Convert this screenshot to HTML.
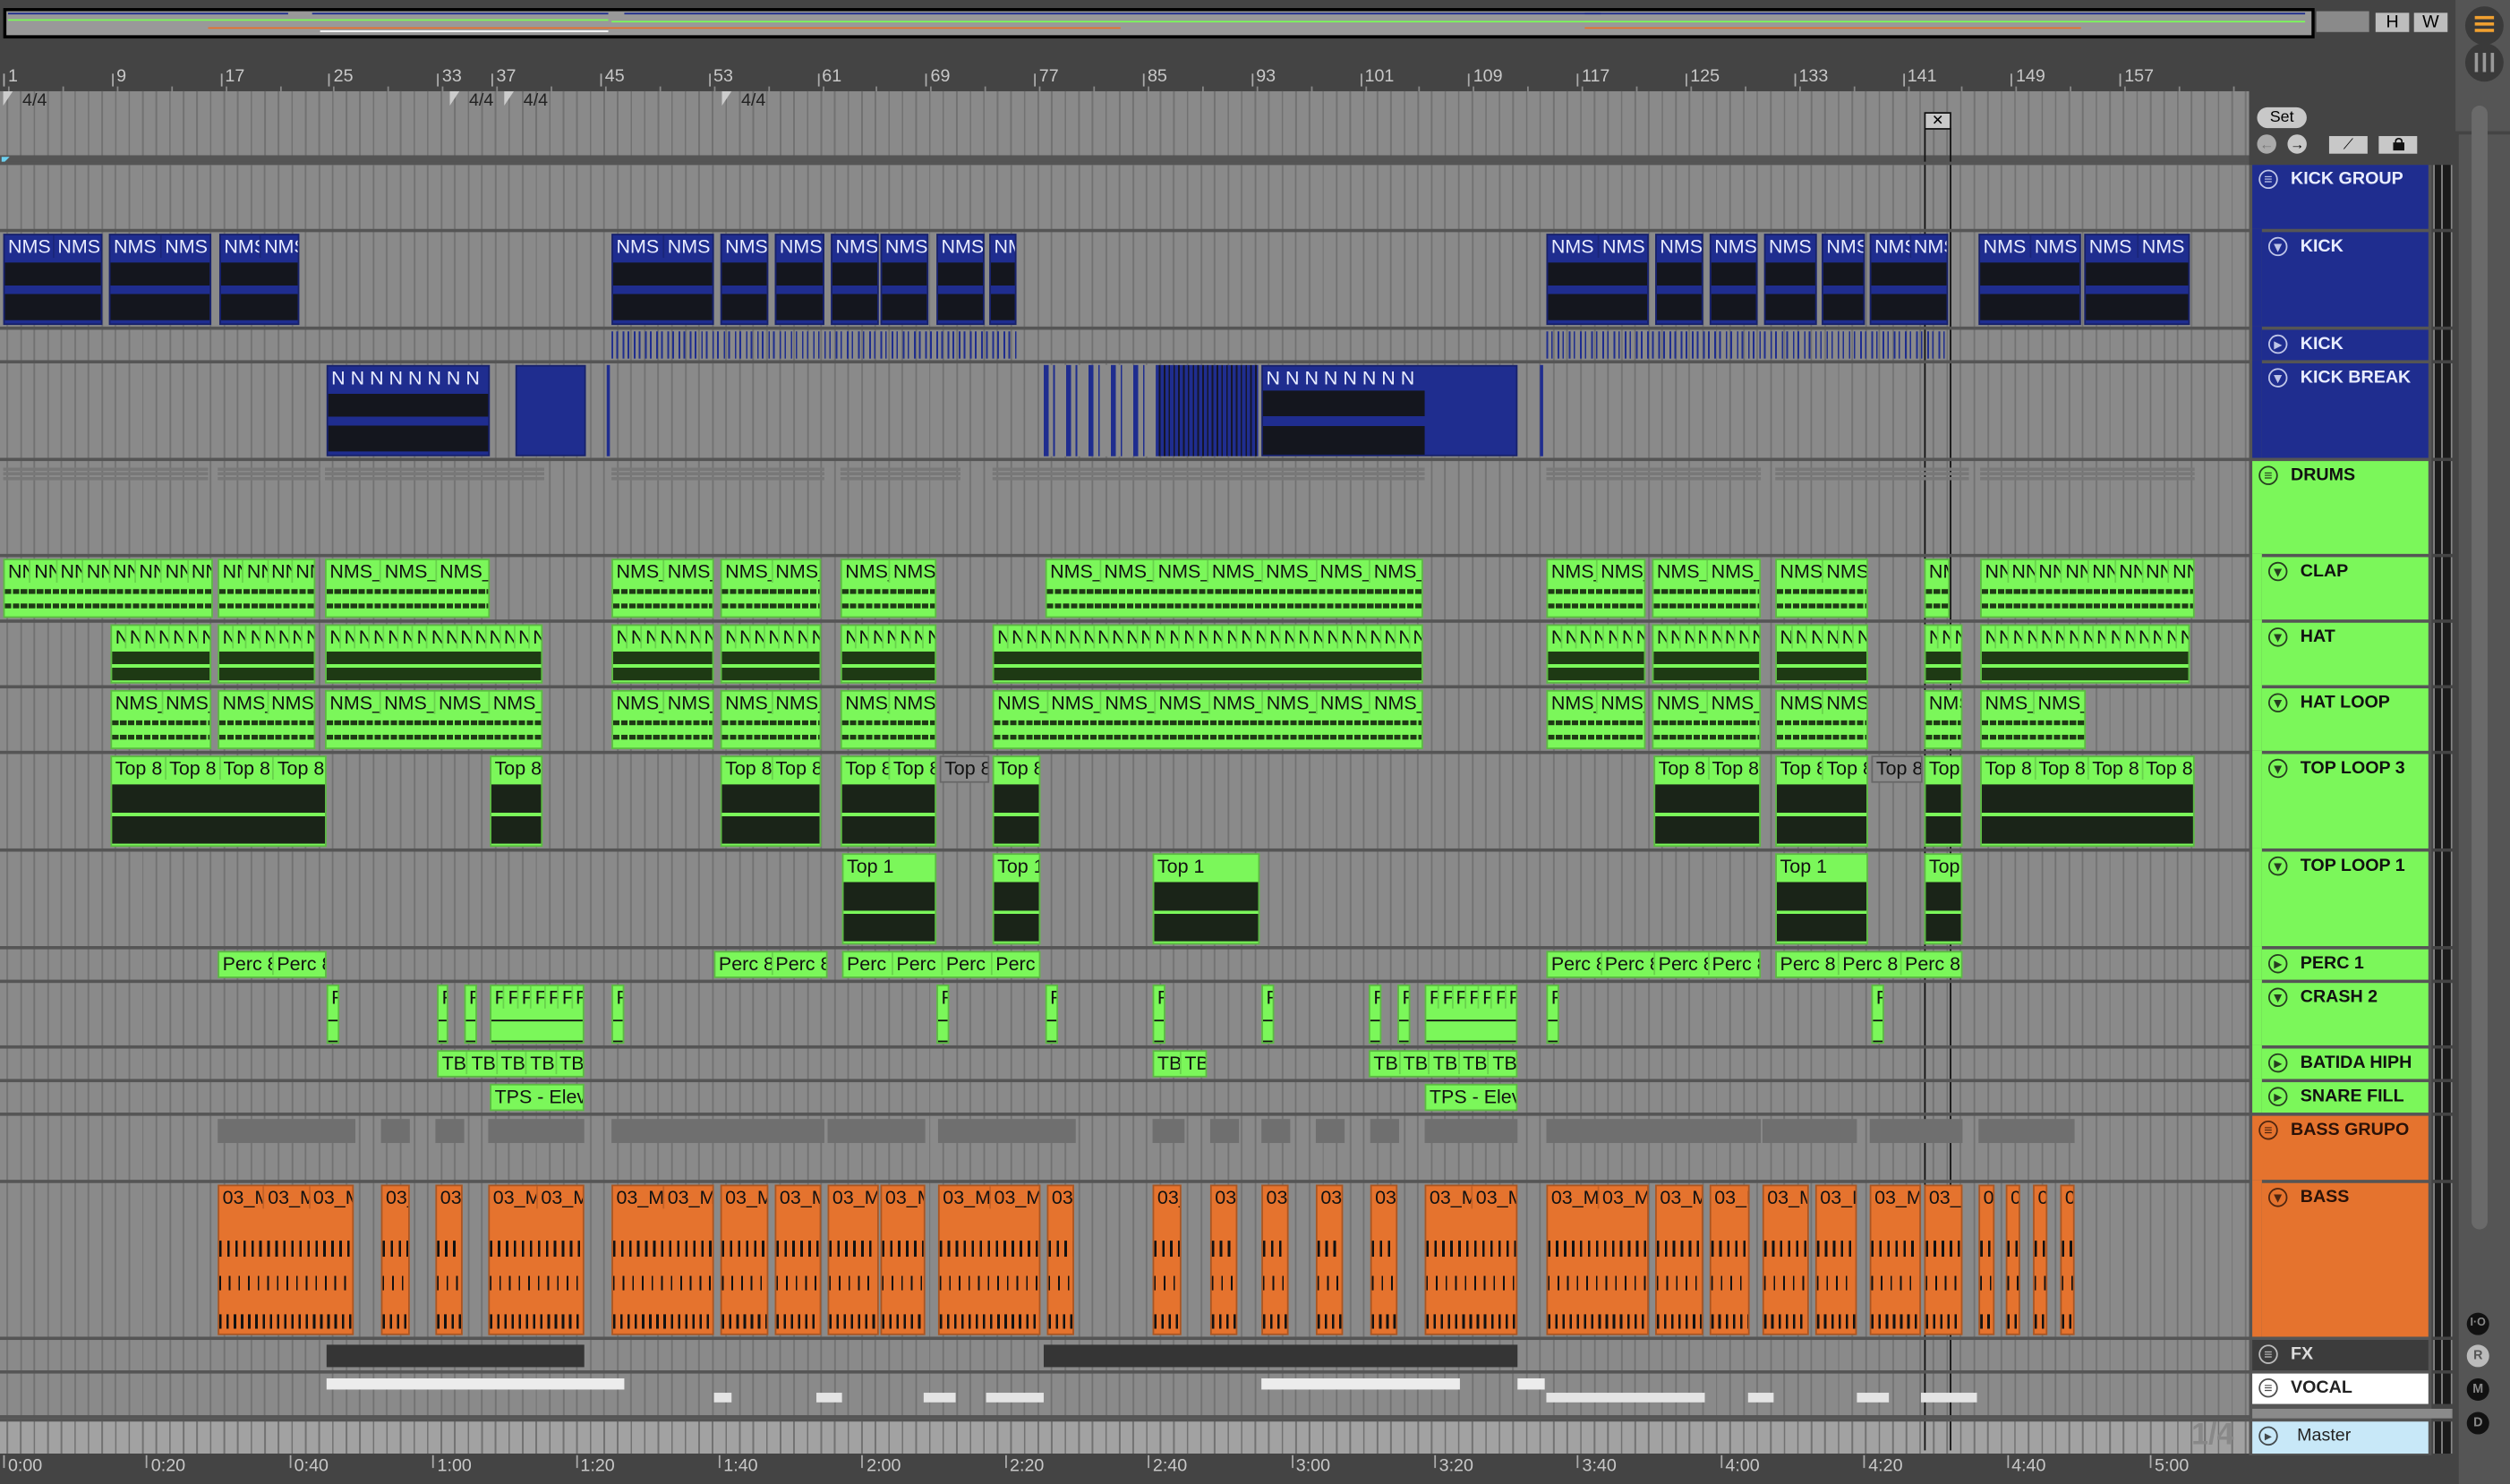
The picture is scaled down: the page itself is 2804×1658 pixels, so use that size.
<!DOCTYPE html>
<html><head><meta charset="utf-8">
<style>
html,body{margin:0;padding:0;background:#444;overflow:hidden;width:2804px;height:1658px}
#w{position:absolute;left:0;top:0;width:1568px;height:927px;transform:scale(1.78827,1.78856);transform-origin:0 0;background:#444;font-family:"Liberation Sans Narrow","Liberation Sans",sans-serif;overflow:hidden}
.a{position:absolute}
.grid{background-color:#8a8a8a;background-image:repeating-linear-gradient(90deg,#727272 0 1px,transparent 1px 8.475px);background-position:4px 0}
</style></head><body>
<div id="w">
<div class="a" style="left:2px;top:5px;width:1440px;height:15px;border:2px solid #000;background:#999"></div>
<div class="a" style="left:1447px;top:7px;width:33px;height:13px;background:#8a8a8a"></div>
<div class="a" style="left:1484px;top:8px;width:21px;height:12px;background:#bdbdbd;font:11px 'Liberation Sans',sans-serif;text-align:center;line-height:12px">H</div>
<div class="a" style="left:1508px;top:8px;width:21px;height:12px;background:#bdbdbd;font:11px 'Liberation Sans',sans-serif;text-align:center;line-height:12px">W</div>
<div class="a" style="left:1534px;top:0;width:34px;height:82px;background:#555"></div>
<div class="a" style="left:1540px;top:4px;width:24px;height:24px;border-radius:50%;background:#3a3a3a"></div>
<div class="a" style="left:1546px;top:10px;width:12px;height:2px;background:#f0a030;box-shadow:0 4px 0 #f0a030,0 8px 0 #f0a030"></div>
<div class="a" style="left:1540px;top:27px;width:24px;height:24px;border-radius:50%;background:#3a3a3a"></div>
<div class="a" style="left:1546px;top:33px;width:2px;height:12px;background:#999;box-shadow:5px 0 0 #999,10px 0 0 #999"></div>
<div class="a" style="left:1536px;top:84px;width:32px;height:843px;background:#555"></div>
<div class="a" style="left:1544px;top:66px;width:10px;height:702px;border-radius:5px;background:#6a6a6a"></div>
<div class="a" style="left:1541px;top:820px;width:14px;height:14px;border-radius:50%;background:#111;color:#888;font:bold 7px 'Liberation Sans';text-align:center;line-height:14px">I·O</div>
<div class="a" style="left:1541px;top:840px;width:14px;height:14px;border-radius:50%;background:#bbb;color:#555;font:bold 8px 'Liberation Sans';text-align:center;line-height:14px">R</div>
<div class="a" style="left:1541px;top:861px;width:14px;height:14px;border-radius:50%;background:#111;color:#888;font:bold 8px 'Liberation Sans';text-align:center;line-height:14px">M</div>
<div class="a" style="left:1541px;top:882px;width:14px;height:14px;border-radius:50%;background:#111;color:#888;font:bold 8px 'Liberation Sans';text-align:center;line-height:14px">D</div>
<div class="a grid" style="left:0;top:57px;width:1405px;height:40px"></div>
<div class="a" style="left:0;top:97px;width:1405px;height:6px;background:#555"></div>
<div class="a" style="left:1px;top:98px;width:0;height:0;border-left:5px solid #6cd0f0;border-bottom:5px solid transparent"></div>
<div class="a grid" id="arr" style="left:0;top:103px;width:1405px;height:783px"></div>
<div class="a grid" style="left:0;top:886px;width:1405px;height:22px;background-color:#a2a2a2"></div>
<div class="a" style="left:1369px;top:886px;font:bold 19px 'Liberation Sans';color:#888">1/4</div>
<div class="a" style="left:1410px;top:67px;width:31px;height:13px;border-radius:7px;background:#c8c8c8;font:10px 'Liberation Sans';text-align:center;line-height:13px">Set</div>
<div class="a" style="left:1410px;top:84px;width:12px;height:12px;border-radius:50%;background:#aaa;font:9px 'Liberation Sans';text-align:center;line-height:12px;color:#777">←</div>
<div class="a" style="left:1429px;top:84px;width:12px;height:12px;border-radius:50%;background:#c8c8c8;font:bold 9px 'Liberation Sans';text-align:center;line-height:12px">→</div>
<div class="a" style="left:1455px;top:85px;width:24px;height:11px;background:#c8c8c8;font:9px 'Liberation Sans';text-align:center;line-height:11px">⟋</div>
<div class="a" style="left:1486px;top:85px;width:24px;height:11px;background:#c8c8c8"><div style="position:absolute;left:9px;top:4px;width:7px;height:5px;background:#111"></div><div style="position:absolute;left:10px;top:1px;width:3px;height:3px;border:1px solid #111;border-bottom:none;border-radius:3px 3px 0 0"></div></div>
<div class="a" style="left:1405px;top:103px;width:114px;height:806px;background:#555"></div>
<div class="a" style="left:0;top:908px;width:1405px;height:19px;background:#444"></div>
<div class="a" style="left:1202px;top:70px;width:15px;height:9px;background:#c8c8c8;border:1px solid #111;text-align:center;font:9px 'Liberation Sans';line-height:9px">✕</div>
<div class="a" style="left:1202px;top:80px;width:1px;height:826px;background:#111"></div>
<div class="a" style="left:1218px;top:80px;width:1px;height:826px;background:#111"></div>
</div>
<script>
var W=document.getElementById('w');
function el(css,html){var d=document.createElement('div');d.className='a';d.style.cssText=css;if(html)d.innerHTML=html;W.appendChild(d);return d;}
var bars=[1,9,17,25,33,37,45,53,61,69,77,85,93,101,109,117,125,133,141,149,157];
bars.forEach(function(b){var x=5+(b-1)*8.475;el('left:'+(x-3)+'px;top:46px;width:1px;height:8px;background:#aaa');el('left:'+x+'px;top:42px;font-size:11px;color:#c8c8c8',''+b);});
for(var i=0;i<42;i++){el('left:'+(5+i*33.9)+'px;top:54px;width:1px;height:3px;background:#888');}
[[5,'4/4'],[284,'4/4'],[318,'4/4'],[454,'4/4']].forEach(function(t){el('left:'+(t[0]-3)+'px;top:57px;width:0;height:0;border-top:9px solid #ccc;border-right:6px solid transparent');el('left:'+(t[0]+9)+'px;top:57px;font-size:11px;color:#222',t[1]);});
var tl=['0:00','0:20','0:40','1:00','1:20','1:40','2:00','2:20','2:40','3:00','3:20','3:40','4:00','4:20','4:40','5:00'];
tl.forEach(function(t,i){var x=5+i*89.4;el('left:'+(x-3)+'px;top:909px;width:1px;height:8px;background:#aaa');el('left:'+x+'px;top:910px;font-size:11px;color:#c8c8c8',t);});
var T=[
['KICK GROUP',103,41,'#1f2d8f','#e8ecff','g',0],
['KICK',145,60,'#1f2d8f','#e8ecff','d',1],
['KICK',206,20,'#1f2d8f','#e8ecff','p',1],
['KICK BREAK',227,60,'#1f2d8f','#e8ecff','d',1],
['DRUMS',288,59,'#7bf75a','#111','g',0],
['CLAP',348,40,'#7bf75a','#111','d',1],
['HAT',389,40,'#7bf75a','#111','d',1],
['HAT LOOP',430,40,'#7bf75a','#111','d',1],
['TOP LOOP 3',471,60,'#7bf75a','#111','d',1],
['TOP LOOP 1',532,60,'#7bf75a','#111','d',1],
['PERC 1',593,20,'#7bf75a','#111','p',1],
['CRASH 2',614,40,'#7bf75a','#111','d',1],
['BATIDA HIPH',655,20,'#7bf75a','#111','p',1],
['SNARE FILL',676,20,'#7bf75a','#111','p',1],
['BASS GRUPO',697,41,'#e5732e','#2a1208','g',0],
['BASS',739,97,'#e5732e','#2a1208','d',1],
['FX',837,20,'#3c3c3c','#ddd','g',0],
['VOCAL',858,20,'#ffffff','#222','g',0],
['Master',888,21,'#c8e8f8','#222','p',0]];
T.forEach(function(t){
 var y=t[1],h=t[2];
 el('left:0;top:'+(y-2)+'px;width:1405px;height:2px;background:#555');
 var ind=t[6]?6:0;
 var d=el('left:'+(1407+ind)+'px;top:'+y+'px;width:'+(110-ind)+'px;height:'+(h-1)+'px;background:'+t[3]+';color:'+t[4]+';font-family:"Liberation Sans",sans-serif;font-weight:'+(t[0]=='Master'?'normal':'bold')+';font-size:11px');
 if(ind) el('left:1407px;top:'+(y-2)+'px;width:6px;height:'+(h+1)+'px;background:'+t[3]);
 var icc=t[5]=='g'?'≡':(t[5]=='d'?'▾':'▸');
 d.innerHTML='<div style="position:absolute;left:4px;top:3px;width:12px;height:12px;border:1.3px solid '+t[4]+';opacity:.8;border-radius:50%;box-sizing:border-box;font-size:9px;line-height:10px;text-align:center">'+icc+'</div><span style="position:absolute;left:'+(t[0]=='Master'?28:24)+'px;top:3px">'+t[0]+'</span>';
 el('left:1520px;top:'+y+'px;width:12px;height:'+(h-1)+'px;background:#1a1a1a;border-left:1px solid #888;border-right:1px solid #888;box-sizing:border-box');
 el('left:1525px;top:'+y+'px;width:1px;height:'+(h-1)+'px;background:#888');
});
el('left:1407px;top:880px;width:125px;height:6px;background:#8a8a8a');
el('left:0;top:884px;width:1405px;height:2px;background:#555');
function C(x1,x2,y,h,col,txt,sub,wave,lab){
 var d=el('left:'+x1+'px;top:'+(y+1)+'px;width:'+(x2-x1)+'px;height:'+(h-3)+'px;background:'+col+';overflow:hidden;border:1px solid rgba(0,0,0,.25);box-sizing:border-box');
 var s='';var n=Math.max(1,Math.round((x2-x1)/sub));var sw=(x2-x1)/n;
 var tc=col=='#1f2d8f'?'#e8ecff':'#111';
 if(lab!==false){s+='<div style="position:absolute;left:0;top:0;height:14px;width:100%;white-space:nowrap;font-size:12px;line-height:15px;color:'+tc+'">';
 for(var i=0;i<n;i++)s+='<div style="display:inline-block;width:'+sw+'px;height:14px;overflow:hidden;box-sizing:border-box;border-right:1px solid rgba(0,0,0,.15);padding-left:2px;vertical-align:top">'+txt+'</div>';
 s+='</div>';}
 var top=lab===false?0:14;
 if(wave=='blue')s+='<div style="position:absolute;left:0;right:0;top:'+(top+3)+'px;bottom:2px;background:linear-gradient(#14161e 0 40%,#1f2d8f 40% 55%,#14161e 55%)"></div>';
 if(wave=='gl')s+='<div style="position:absolute;left:0;right:0;top:'+(top+4)+'px;height:3px;background:repeating-linear-gradient(90deg,#1e3a14 0 4px,#7bf75a 4px 5px)"></div><div style="position:absolute;left:0;right:0;top:'+(top+13)+'px;height:3px;background:repeating-linear-gradient(90deg,#1e3a14 0 4px,#7bf75a 4px 5px)"></div>';
 if(wave=='gd')s+='<div style="position:absolute;left:0;right:0;top:'+(top+2)+'px;bottom:1px;background:linear-gradient(#1e3a14 0 44%,#7bf75a 44% 56%,#1e3a14 56%)"></div>';
 if(wave=='top')s+='<div style="position:absolute;left:0;right:0;top:'+(top+3)+'px;bottom:1px;background:linear-gradient(#1a2418 0 48%,#7bf75a 48% 54%,#1a2418 54%)"></div>';
 if(wave=='bass')s+='<div style="position:absolute;left:0;right:0;top:'+(top+20)+'px;height:10px;background:repeating-linear-gradient(90deg,#111 0 1.5px,transparent 1.5px 5px)"></div><div style="position:absolute;left:0;right:0;top:'+(top+42)+'px;height:9px;background:repeating-linear-gradient(90deg,#111 0 1px,transparent 1px 6px)"></div><div style="position:absolute;left:0;right:0;bottom:3px;height:9px;background:repeating-linear-gradient(90deg,#111 0 1.5px,transparent 1.5px 4.5px)"></div>';
 if(wave=='f')s+='<div style="position:absolute;left:0;right:0;top:'+(top+7)+'px;height:1px;background:#111"></div><div style="position:absolute;left:0;right:0;top:'+(top+20)+'px;height:1px;background:#111"></div>';
 d.innerHTML=s;return d;}
var B='#1f2d8f',G='#7bf75a',O='#e5732e';
[[2,64],[68,132],[137,187],[382,446],[450,480],[484,515],[519,549],[550,580],[585,615],[618,635],[966,1030],[1034,1064],[1068,1098],[1102,1135],[1138,1165],[1168,1217],[1236,1300],[1302,1368]].forEach(function(c){C(c[0],c[1],145,60,B,'NMS',32,'blue');});
[[382,635],[966,1217]].forEach(function(c){el('left:'+c[0]+'px;top:207px;width:'+(c[1]-c[0])+'px;height:17px;background:repeating-linear-gradient(90deg,#1f2d8f 0 1px,transparent 1px 3px,#1f2d8f 3px 4px,transparent 4px 7px)');});
C(204,306,227,60,B,'N N N N N N N N',102,'blue');
C(322,366,227,60,B,'',60,'none',false);
el('left:379px;top:228px;width:2px;height:57px;background:'+B);
el('left:652px;top:228px;width:70px;height:57px;background:repeating-linear-gradient(90deg,#1f2d8f 0 3px,#8a8a8a 3px 6px,#1f2d8f 6px 7px,#8a8a8a 7px 14px)');
el('left:722px;top:228px;width:64px;height:57px;background:repeating-linear-gradient(90deg,#1f2d8f 0 2px,#15162a 2px 3px)');
C(788,948,227,60,B,'N N N N N N N N',160,'none');
el('left:789px;top:244px;width:101px;height:40px;background:linear-gradient(#14161e 0 40%,#1f2d8f 40% 55%,#14161e 55%)');
el('left:962px;top:228px;width:2px;height:57px;background:'+B);
[[2,130],[136,200],[203,340],[382,515],[525,600],[620,890],[966,1100],[1109,1230],[1237,1371]].forEach(function(c){el('left:'+c[0]+'px;top:292px;width:'+(c[1]-c[0])+'px;height:9px;background:repeating-linear-gradient(#787878 0 2px,transparent 2px 3px)');});
[[2,133],[136,197],[203,306],[382,446],[450,513],[525,585],[653,889],[966,1028],[1032,1100],[1109,1167],[1202,1218],[1237,1371]].forEach(function(c,i){C(c[0],c[1],348,40,G,i==0||i==1||i==11?'NN':'NMS_',i==0||i==1||i==11?17:34,'gl');});
[[69,132],[136,197],[203,339],[382,446],[450,513],[525,585],[620,889],[966,1028],[1032,1100],[1109,1167],[1202,1226],[1237,1368]].forEach(function(c){C(c[0],c[1],389,40,G,'N',9,'gd');});
[[69,132],[136,197],[203,339],[382,446],[450,513],[525,585],[620,889],[966,1028],[1032,1100],[1109,1167],[1202,1226],[1237,1303]].forEach(function(c){C(c[0],c[1],430,40,G,'NMS_',34,'gl');});
[[69,204],[306,339],[450,513],[525,585],[620,650],[1033,1100],[1109,1167],[1202,1226],[1237,1371]].forEach(function(c){C(c[0],c[1],471,60,G,'Top 8',34,'top');});
[[587,618],[1169,1201]].forEach(function(c){C(c[0],c[1],471,20,'#8a8a8a','Top 8',34,'none');});
[[526,585],[620,650],[720,787],[1109,1167],[1202,1226]].forEach(function(c){C(c[0],c[1],532,60,G,'Top 1',68,'top');});
[[136,204],[446,517],[526,650],[966,1100],[1109,1226]].forEach(function(c){C(c[0],c[1],593,20,G,'Perc 8',34,'none');});
[[204,212],[273,280],[290,298],[306,365],[382,390],[585,593],[653,661],[720,728],[788,796],[855,863],[873,881],[890,948],[966,974],[1169,1177]].forEach(function(c){C(c[0],c[1],614,40,G,'F',8,'f');});
[[273,365],[720,754],[855,948]].forEach(function(c){C(c[0],c[1],655,20,G,'TB',17,'none');});
[[306,365],[890,948]].forEach(function(c){C(c[0],c[1],676,20,G,'TPS - Elevation',200,'none');});
[[136,222],[238,256],[272,290],[305,365],[382,515],[517,578],[586,672],[720,740],[756,774],[788,806],[822,840],[856,874],[890,948],[966,1100],[1101,1160],[1168,1226],[1236,1296]].forEach(function(c){el('left:'+c[0]+'px;top:699px;width:'+(c[1]-c[0])+'px;height:15px;background:#6f6f6f');});
[[136,221],[238,256],[272,289],[305,365],[382,446],[450,480],[484,513],[517,549],[550,578],[586,650],[654,671],[720,738],[756,773],[788,805],[822,839],[856,873],[890,948],[966,1030],[1034,1064],[1068,1093],[1101,1130],[1134,1160],[1168,1200],[1202,1226],[1236,1246],[1253,1262],[1270,1279],[1287,1296]].forEach(function(c){C(c[0],c[1],739,97,O,'03_M',34,'bass');});
[[204,365],[652,948]].forEach(function(c){el('left:'+c[0]+'px;top:840px;width:'+(c[1]-c[0])+'px;height:14px;background:#353535');});
[[204,390],[788,912],[948,965]].forEach(function(c){el('left:'+c[0]+'px;top:861px;width:'+(c[1]-c[0])+'px;height:7px;background:#ececec');});
[[446,457],[510,526],[577,597],[616,652],[966,1065],[1092,1108],[1160,1180],[1200,1235]].forEach(function(c){el('left:'+c[0]+'px;top:870px;width:'+(c[1]-c[0])+'px;height:6px;background:#e4e4e4');});
function ov(x1,x2,y,c){el('left:'+x1+'px;top:'+y+'px;width:'+(x2-x1)+'px;height:1px;background:'+c);}
ov(5,380,12,'#7bf75a');ov(382,1000,13,'#7bf75a');ov(990,1440,13,'#7bf75a');ov(5,180,8,'#1f2d8f');ov(195,380,8,'#1f2d8f');ov(390,1000,8,'#1f2d8f');ov(990,1440,8,'#1f2d8f');ov(130,700,17,'#e5732e');ov(990,1300,17,'#e5732e');ov(200,380,19,'#fff');
</script>
</body></html>
